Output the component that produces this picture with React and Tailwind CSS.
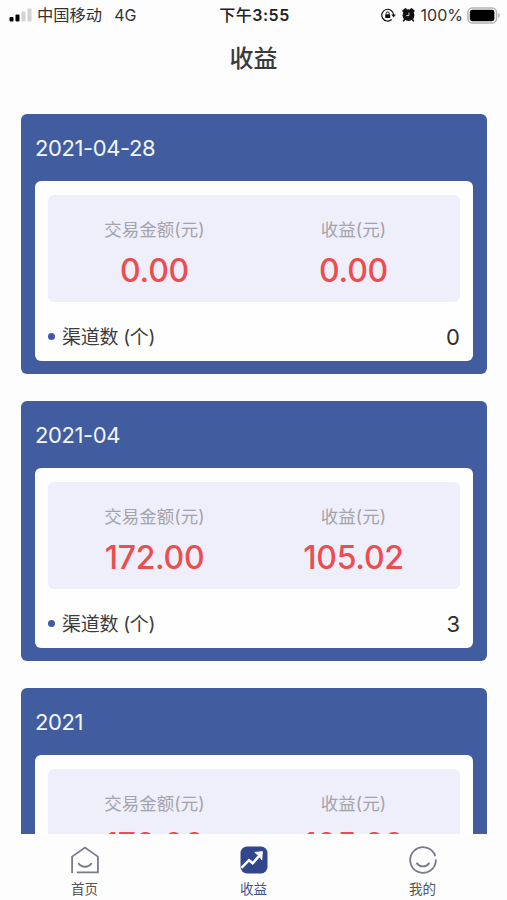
import React from 'react';

const records = [
  { date: '2021-04-28', amount: '0.00', income: '0.00', channels: 0 },
  { date: '2021-04', amount: '172.00', income: '105.02', channels: 3 },
  { date: '2021', amount: '172.00', income: '105.02', channels: 3 },
];

const SignalIcon = () => (
  <svg width="24" height="14" viewBox="0 0 24 14">
    <rect x="0.5" y="9" width="4" height="4.5" rx="1" fill="#000" />
    <rect x="6.5" y="6.5" width="4" height="7" rx="1" fill="#000" />
    <rect x="12.5" y="3.5" width="4" height="10" rx="1" fill="#d2d2d2" />
    <rect x="18.5" y="0.5" width="4" height="13" rx="1" fill="#d2d2d2" />
  </svg>
);

const RotationLockIcon = () => (
  <svg width="15" height="14" viewBox="0 0 15 14" fill="none">
    <path d="M10.8 11.4A5.9 5.9 0 1 1 12.6 7" stroke="#111" strokeWidth="1.2" />
    <path d="M10.4 6.4h4.4l-2.2 3z" fill="#111" />
    <rect x="4.2" y="6.3" width="5" height="3.8" rx="0.6" fill="#111" />
    <path d="M5.2 6.5V5.4a1.5 1.5 0 0 1 3 0v1.1" stroke="#111" strokeWidth="1" />
  </svg>
);

const AlarmIcon = () => (
  <svg width="13" height="14" viewBox="0 0 13 14" fill="none">
    <circle cx="6.5" cy="7.2" r="5.9" fill="#111" />
    <path d="M1.7 3 3.6 1.5M11.3 3 9.4 1.5" stroke="#111" strokeWidth="2.6" strokeLinecap="round" />
    <path d="M2.8 11.3 1.6 12.8M10.2 11.3l1.2 1.5" stroke="#111" strokeWidth="1.6" strokeLinecap="round" />
    <path d="M6.9 4.6v3H4.2" stroke="#fff" strokeWidth="0.8" />
  </svg>
);

const BatteryIcon = () => (
  <svg width="33" height="17" viewBox="0 0 33 17">
    <rect x="0.9" y="0.9" width="28.6" height="15.2" rx="4.4" fill="#fff" stroke="#b2b2b2" strokeWidth="1.5" />
    <rect x="2.8" y="2.8" width="24.6" height="11.4" rx="2.4" fill="#000" />
    <path d="M31.2 6v5c1.3-.6 1.6-1.5 1.6-2.5s-.3-1.9-1.6-2.5z" fill="#b2b2b2" />
  </svg>
);

const HomeIcon = () => (
  <svg width="28" height="28" viewBox="0 0 28 28" fill="none" stroke="#797b8b" strokeWidth="1.8">
    <path d="M1.1 27V10.6L14 1.6l12.9 9v15.8H5.8" />
    <path d="M7.8 17.8c2.9 4 9.5 4 12.4 0" strokeLinecap="round" strokeWidth="1.9" />
  </svg>
);

const IncomeIcon = () => (
  <svg width="28" height="28" viewBox="0 0 28 28" fill="none">
    <rect x="0.5" y="0.5" width="27" height="27" rx="6.5" fill="#30468d" />
    <path d="M1.4 21.8 9 14.2l3.7 3.1 7.6-8.6" stroke="#fff" strokeWidth="2.6" />
    <path d="M14.8 6.4 22.4 5.6l-.6 8.4-2.6-3.9z" fill="#fff" stroke="#fff" strokeWidth="0.8" />
  </svg>
);

const MineIcon = () => (
  <svg width="28" height="28" viewBox="0 0 28 28" fill="none" stroke="#797b8b">
    <path d="M26.2 10.1A12.8 12.8 0 1 0 26.8 13.4" strokeWidth="1.8" />
    <path d="M8 17.4c2.7 4 9.3 4 12 0" strokeLinecap="round" strokeWidth="1.9" />
  </svg>
);

const tabs = [
  { label: '首页', icon: HomeIcon },
  { label: '收益', icon: IncomeIcon, active: true },
  { label: '我的', icon: MineIcon },
];

const Stat = ({ label, value }) => (
  <div className="flex flex-1 flex-col items-center">
    <span className="text-[17.5px] leading-6 text-[#a3a3a9]">{label}</span>
    <span className="mt-[13px] text-[32px] leading-8 font-medium tracking-[-0.3px] text-[#ee4d4f]">{value}</span>
  </div>
);

const RecordCard = ({ record }) => (
  <div className="h-[260px] shrink-0 rounded-md bg-[#415da0] px-3.5">
    <div className="flex h-[67px] items-center pt-0.5 text-[22px] tracking-[-0.4px] text-[#f3f6ff]">{record.date}</div>
    <div className="h-[180px] rounded-md bg-[#fefefe] px-[13px] pt-3.5">
      <div className="flex h-[107px] rounded-md bg-[#efeffc] px-[7px] pt-[23px]">
        <Stat label="交易金额(元)" value={record.amount} />
        <Stat label="收益(元)" value={record.income} />
      </div>
      <div className="flex h-[68px] items-center">
        <span className="size-[7px] rounded-full bg-[#3f5ba6]" />
        <span className="ml-[7px] pt-1 text-[19px] tracking-[-0.3px] text-[#3c3c3c]">渠道数 (个)</span>
        <span className="ml-auto pt-0.5 text-[22px] text-[#2e2e2e]">{record.channels}</span>
      </div>
    </div>
  </div>
);

const App = () => {
  return (
    <div className="flex h-[900px] w-[507px] flex-col overflow-hidden bg-[#fdfdfd] font-['Inter','Noto_Sans_CJK_SC',sans-serif]">
      {/* Status bar */}
      <div className="grid h-[30px] grid-cols-3 items-center pr-[7px] pl-[9px] text-[16px] text-[#333]">
        <div className="flex items-center">
          <SignalIcon />
          <span className="ml-1 text-[16.3px]">中国移动</span>
          <span className="ml-3">4G</span>
        </div>
        <div className="text-center text-[16px] font-semibold tracking-[0.5px] text-[#222]">
          <span className="font-medium">下午</span>3:55
        </div>
        <div className="flex items-center justify-end">
          <RotationLockIcon />
          <span className="ml-1.5"><AlarmIcon /></span>
          <span className="mr-1 ml-1.5">100%</span>
          <BatteryIcon />
        </div>
      </div>

      {/* Title */}
      <div className="flex h-14 items-center justify-center pt-0.5 text-[24px] font-medium text-[#3a3a3a]">收益</div>

      {/* Records */}
      <div className="flex min-h-0 flex-1 flex-col gap-[27px] overflow-hidden pt-7 pr-5 pl-[21px]">
        {records.map((record) => (
          <RecordCard key={record.date} record={record} />
        ))}
      </div>

      {/* Tab bar */}
      <div className="grid h-[66px] shrink-0 grid-cols-3">
        {tabs.map(({ label, icon: Icon, active }) => (
          <div key={label} className="flex flex-col items-center pt-3">
            <Icon />
            <span className={`mt-[5px] text-[13.5px] leading-5 ${active ? 'text-[#3f5290]' : 'text-[#555]'}`}>{label}</span>
          </div>
        ))}
      </div>
    </div>
  );
};

export default App;
